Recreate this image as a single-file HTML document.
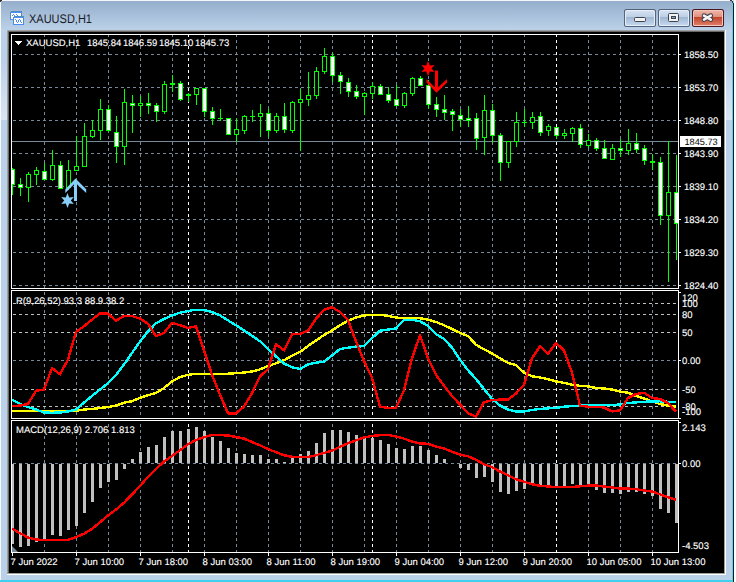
<!DOCTYPE html><html><head><meta charset="utf-8"><style>html,body{margin:0;padding:0;background:#fff;overflow:hidden;width:736px;height:582px}svg{display:block}text{font-family:"Liberation Sans", sans-serif}</style></head><body>
<svg width="736" height="582" viewBox="0 0 736 582">
<defs>
<linearGradient id="tb" x1="0" y1="0" x2="0" y2="1">
<stop offset="0" stop-color="#95aecb"/><stop offset="1" stop-color="#bcd3ea"/></linearGradient>
<linearGradient id="btnU" x1="0" y1="0" x2="0" y2="1"><stop offset="0" stop-color="#d3e1f0"/><stop offset="1" stop-color="#bccfe6"/></linearGradient>
<linearGradient id="btnL" x1="0" y1="0" x2="0" y2="1"><stop offset="0" stop-color="#9fb6d1"/><stop offset="1" stop-color="#c3d6ec"/></linearGradient>
<linearGradient id="clU" x1="0" y1="0" x2="0" y2="1"><stop offset="0" stop-color="#eeb2a4"/><stop offset="1" stop-color="#e0907e"/></linearGradient>
<linearGradient id="clL" x1="0" y1="0" x2="0" y2="1"><stop offset="0" stop-color="#c0432a"/><stop offset="1" stop-color="#dd7a64"/></linearGradient>
<linearGradient id="gl" x1="0" y1="0" x2="0" y2="1"><stop offset="0" stop-color="#dce8f4" stop-opacity="0"/><stop offset="1" stop-color="#dce8f4" stop-opacity="0.9"/></linearGradient>
<clipPath id="p1"><rect x="12" y="35" width="666" height="253"/></clipPath>
<clipPath id="p2"><rect x="12" y="291" width="666" height="127"/></clipPath>
<clipPath id="p3"><rect x="12" y="421" width="666" height="131"/></clipPath>
</defs>
<g shape-rendering="crispEdges">
<rect x="0" y="0" width="736" height="582" fill="#bad1ea"/>
<rect x="0" y="1" width="733" height="30" fill="url(#tb)"/>
<rect x="0" y="0" width="733" height="1" fill="#f4f6f8"/>
<rect x="0" y="0" width="1" height="582" fill="#f8f8f8"/>
<rect x="1" y="60" width="6" height="60" fill="url(#gl)"/><rect x="726" y="60" width="6" height="60" fill="url(#gl)"/>
<rect x="0" y="0" width="2" height="1" fill="#303030"/><rect x="0" y="1" width="1" height="1" fill="#404040"/><rect x="1" y="1" width="1" height="1" fill="#a0a8b0"/>
<rect x="730" y="0" width="2" height="1" fill="#303030"/><rect x="732" y="1" width="1" height="2" fill="#303030"/><rect x="731" y="1" width="1" height="1" fill="#80a0b0"/>
<rect x="734" y="0" width="2" height="582" fill="#ffffff"/>
<rect x="733" y="3" width="1" height="579" fill="#1c1c1c"/>
<rect x="732" y="3" width="1" height="579" fill="#5ad0f8"/>
<rect x="0" y="580" width="733" height="2" fill="#3fd0ee"/>
<rect x="7" y="30" width="719" height="545" fill="#ffffff"/>
<rect x="7" y="30" width="718" height="544" fill="#a0a0a0"/>
<rect x="8" y="31" width="716" height="542" fill="#696969"/>
<rect x="9" y="32" width="715" height="541" fill="#000000"/>
</g>
<g shape-rendering="crispEdges"><rect x="11" y="12" width="10" height="7" fill="#ffffff"/><rect x="10" y="12" width="1" height="1" fill="#4b8cf6"/><rect x="10" y="19" width="1" height="1" fill="#4b8cf6"/><rect x="11" y="11" width="1" height="1" fill="#4f8f86"/><rect x="11" y="12" width="1" height="1" fill="#4b8cf6"/><rect x="11" y="19" width="1" height="1" fill="#4b8cf6"/><rect x="12" y="11" width="1" height="1" fill="#4b8cf6"/><rect x="12" y="12" width="1" height="1" fill="#4b8cf6"/><rect x="12" y="19" width="1" height="1" fill="#4b8cf6"/><rect x="13" y="11" width="1" height="1" fill="#4f8f86"/><rect x="13" y="12" width="1" height="1" fill="#4b8cf6"/><rect x="13" y="19" width="1" height="1" fill="#4b8cf6"/><rect x="14" y="11" width="1" height="1" fill="#4b8cf6"/><rect x="14" y="12" width="1" height="1" fill="#4b8cf6"/><rect x="14" y="19" width="1" height="1" fill="#4b8cf6"/><rect x="15" y="11" width="1" height="1" fill="#4f8f86"/><rect x="15" y="12" width="1" height="1" fill="#4b8cf6"/><rect x="15" y="19" width="1" height="1" fill="#4b8cf6"/><rect x="16" y="11" width="1" height="1" fill="#4b8cf6"/><rect x="16" y="12" width="1" height="1" fill="#4b8cf6"/><rect x="16" y="19" width="1" height="1" fill="#4b8cf6"/><rect x="17" y="11" width="1" height="1" fill="#4f8f86"/><rect x="17" y="12" width="1" height="1" fill="#4b8cf6"/><rect x="17" y="19" width="1" height="1" fill="#4b8cf6"/><rect x="18" y="11" width="1" height="1" fill="#4b8cf6"/><rect x="18" y="12" width="1" height="1" fill="#4b8cf6"/><rect x="18" y="19" width="1" height="1" fill="#4b8cf6"/><rect x="19" y="11" width="1" height="1" fill="#4f8f86"/><rect x="19" y="12" width="1" height="1" fill="#4b8cf6"/><rect x="19" y="19" width="1" height="1" fill="#4b8cf6"/><rect x="20" y="11" width="1" height="1" fill="#4b8cf6"/><rect x="20" y="12" width="1" height="1" fill="#4b8cf6"/><rect x="20" y="19" width="1" height="1" fill="#4b8cf6"/><rect x="21" y="11" width="1" height="1" fill="#4f8f86"/><rect x="21" y="12" width="1" height="1" fill="#4b8cf6"/><rect x="21" y="19" width="1" height="1" fill="#4b8cf6"/><rect x="10" y="12" width="1" height="1" fill="#4b8cf6"/><rect x="21" y="12" width="1" height="1" fill="#4b8cf6"/><rect x="10" y="13" width="1" height="1" fill="#4f8f86"/><rect x="21" y="13" width="1" height="1" fill="#4f8f86"/><rect x="10" y="14" width="1" height="1" fill="#4b8cf6"/><rect x="21" y="14" width="1" height="1" fill="#4b8cf6"/><rect x="10" y="15" width="1" height="1" fill="#4f8f86"/><rect x="21" y="15" width="1" height="1" fill="#4f8f86"/><rect x="10" y="16" width="1" height="1" fill="#4b8cf6"/><rect x="21" y="16" width="1" height="1" fill="#4b8cf6"/><rect x="10" y="17" width="1" height="1" fill="#4f8f86"/><rect x="21" y="17" width="1" height="1" fill="#4f8f86"/><rect x="10" y="18" width="1" height="1" fill="#4b8cf6"/><rect x="21" y="18" width="1" height="1" fill="#4b8cf6"/><rect x="12" y="15" width="1" height="1" fill="#4b8cf6"/><rect x="13" y="14" width="1" height="1" fill="#4b8cf6"/><rect x="14" y="15" width="1" height="1" fill="#4b8cf6"/><rect x="16" y="14" width="1" height="1" fill="#4b8cf6"/><rect x="17" y="15" width="1" height="1" fill="#4b8cf6"/><rect x="18" y="16" width="1" height="1" fill="#4b8cf6"/><rect x="14" y="17" width="9" height="7" fill="#ffffff"/><rect x="13" y="17" width="1" height="1" fill="#4b8cf6"/><rect x="13" y="24" width="1" height="1" fill="#4b8cf6"/><rect x="14" y="16" width="1" height="1" fill="#4f8f86"/><rect x="14" y="17" width="1" height="1" fill="#4b8cf6"/><rect x="14" y="24" width="1" height="1" fill="#4b8cf6"/><rect x="15" y="16" width="1" height="1" fill="#4b8cf6"/><rect x="15" y="17" width="1" height="1" fill="#4b8cf6"/><rect x="15" y="24" width="1" height="1" fill="#4b8cf6"/><rect x="16" y="16" width="1" height="1" fill="#4f8f86"/><rect x="16" y="17" width="1" height="1" fill="#4b8cf6"/><rect x="16" y="24" width="1" height="1" fill="#4b8cf6"/><rect x="17" y="16" width="1" height="1" fill="#4b8cf6"/><rect x="17" y="17" width="1" height="1" fill="#4b8cf6"/><rect x="17" y="24" width="1" height="1" fill="#4b8cf6"/><rect x="18" y="16" width="1" height="1" fill="#4f8f86"/><rect x="18" y="17" width="1" height="1" fill="#4b8cf6"/><rect x="18" y="24" width="1" height="1" fill="#4b8cf6"/><rect x="19" y="16" width="1" height="1" fill="#4b8cf6"/><rect x="19" y="17" width="1" height="1" fill="#4b8cf6"/><rect x="19" y="24" width="1" height="1" fill="#4b8cf6"/><rect x="20" y="16" width="1" height="1" fill="#4f8f86"/><rect x="20" y="17" width="1" height="1" fill="#4b8cf6"/><rect x="20" y="24" width="1" height="1" fill="#4b8cf6"/><rect x="21" y="16" width="1" height="1" fill="#4b8cf6"/><rect x="21" y="17" width="1" height="1" fill="#4b8cf6"/><rect x="21" y="24" width="1" height="1" fill="#4b8cf6"/><rect x="22" y="16" width="1" height="1" fill="#4f8f86"/><rect x="22" y="17" width="1" height="1" fill="#4b8cf6"/><rect x="22" y="24" width="1" height="1" fill="#4b8cf6"/><rect x="23" y="16" width="1" height="1" fill="#4b8cf6"/><rect x="23" y="17" width="1" height="1" fill="#4b8cf6"/><rect x="23" y="24" width="1" height="1" fill="#4b8cf6"/><rect x="13" y="17" width="1" height="1" fill="#4b8cf6"/><rect x="23" y="17" width="1" height="1" fill="#4b8cf6"/><rect x="13" y="18" width="1" height="1" fill="#4f8f86"/><rect x="23" y="18" width="1" height="1" fill="#4f8f86"/><rect x="13" y="19" width="1" height="1" fill="#4b8cf6"/><rect x="23" y="19" width="1" height="1" fill="#4b8cf6"/><rect x="13" y="20" width="1" height="1" fill="#4f8f86"/><rect x="23" y="20" width="1" height="1" fill="#4f8f86"/><rect x="13" y="21" width="1" height="1" fill="#4b8cf6"/><rect x="23" y="21" width="1" height="1" fill="#4b8cf6"/><rect x="13" y="22" width="1" height="1" fill="#4f8f86"/><rect x="23" y="22" width="1" height="1" fill="#4f8f86"/><rect x="13" y="23" width="1" height="1" fill="#4b8cf6"/><rect x="23" y="23" width="1" height="1" fill="#4b8cf6"/><rect x="15" y="19" width="1" height="1" fill="#4b8cf6"/><rect x="16" y="20" width="1" height="1" fill="#4b8cf6"/><rect x="16" y="21" width="1" height="1" fill="#4b8cf6"/><rect x="17" y="22" width="1" height="1" fill="#4b8cf6"/><rect x="18" y="21" width="1" height="1" fill="#4b8cf6"/><rect x="18" y="20" width="1" height="1" fill="#4b8cf6"/><rect x="19" y="19" width="1" height="1" fill="#4b8cf6"/><rect x="20" y="20" width="1" height="1" fill="#4b8cf6"/><rect x="20" y="21" width="1" height="1" fill="#4b8cf6"/><rect x="21" y="22" width="1" height="1" fill="#4b8cf6"/></g>
<text transform="translate(29,22.5) scale(0.88,1)" font-size="12.5" text-rendering="geometricPrecision" fill="#1a1a26">XAUUSD,H1</text>
<rect x="624" y="9" width="32" height="18" rx="2.5" fill="#56627a"/><rect x="625" y="10" width="30" height="16" rx="1.5" fill="#e4eef8"/><rect x="626" y="11" width="28" height="6" fill="url(#btnU)"/><rect x="626" y="17" width="28" height="8" fill="url(#btnL)"/>
<rect x="658" y="9" width="32" height="18" rx="2.5" fill="#56627a"/><rect x="659" y="10" width="30" height="16" rx="1.5" fill="#e4eef8"/><rect x="660" y="11" width="28" height="6" fill="url(#btnU)"/><rect x="660" y="17" width="28" height="8" fill="url(#btnL)"/>
<rect x="692" y="9" width="32" height="18" rx="2.5" fill="#4a1620"/><rect x="693" y="10" width="30" height="16" rx="1.5" fill="#f3c7bc"/><rect x="694" y="11" width="28" height="6" fill="url(#clU)"/><rect x="694" y="17" width="28" height="8" fill="url(#clL)"/>
<rect x="634.5" y="17.5" width="11" height="4" rx="1" fill="#f2f2f2" stroke="#3b4250" stroke-width="1"/>
<rect x="668.5" y="13.5" width="10" height="8" rx="1" fill="#f2f2f2" stroke="#3b4250" stroke-width="1"/>
<rect x="671.5" y="16.5" width="4" height="2" fill="#8aa2c0" stroke="#3b4250" stroke-width="1"/>
<path d="M704,15.6 L710.8,19.6 M710.8,15.6 L704,19.6" stroke="#3a3e4a" stroke-width="4.6" stroke-linecap="round"/>
<path d="M704,15.6 L710.8,19.6 M710.8,15.6 L704,19.6" stroke="#f4f4f4" stroke-width="2.6" stroke-linecap="round"/>
<g shape-rendering="crispEdges">
<line x1="44.5" y1="34" x2="44.5" y2="288" stroke="#778899" stroke-dasharray="3 3"/>
<line x1="44.5" y1="292" x2="44.5" y2="418" stroke="#778899" stroke-dasharray="3 3"/>
<line x1="44.5" y1="424" x2="44.5" y2="552" stroke="#778899" stroke-dasharray="3 3"/>
<line x1="76.5" y1="34" x2="76.5" y2="288" stroke="#778899" stroke-dasharray="3 3"/>
<line x1="76.5" y1="292" x2="76.5" y2="418" stroke="#778899" stroke-dasharray="3 3"/>
<line x1="76.5" y1="424" x2="76.5" y2="552" stroke="#778899" stroke-dasharray="3 3"/>
<line x1="108.5" y1="34" x2="108.5" y2="288" stroke="#778899" stroke-dasharray="3 3"/>
<line x1="108.5" y1="292" x2="108.5" y2="418" stroke="#778899" stroke-dasharray="3 3"/>
<line x1="108.5" y1="424" x2="108.5" y2="552" stroke="#778899" stroke-dasharray="3 3"/>
<line x1="140.5" y1="34" x2="140.5" y2="288" stroke="#778899" stroke-dasharray="3 3"/>
<line x1="140.5" y1="292" x2="140.5" y2="418" stroke="#778899" stroke-dasharray="3 3"/>
<line x1="140.5" y1="424" x2="140.5" y2="552" stroke="#778899" stroke-dasharray="3 3"/>
<line x1="172.5" y1="34" x2="172.5" y2="288" stroke="#778899" stroke-dasharray="3 3"/>
<line x1="172.5" y1="292" x2="172.5" y2="418" stroke="#778899" stroke-dasharray="3 3"/>
<line x1="172.5" y1="424" x2="172.5" y2="552" stroke="#778899" stroke-dasharray="3 3"/>
<line x1="204.5" y1="34" x2="204.5" y2="288" stroke="#778899" stroke-dasharray="3 3"/>
<line x1="204.5" y1="292" x2="204.5" y2="418" stroke="#778899" stroke-dasharray="3 3"/>
<line x1="204.5" y1="424" x2="204.5" y2="552" stroke="#778899" stroke-dasharray="3 3"/>
<line x1="236.5" y1="34" x2="236.5" y2="288" stroke="#778899" stroke-dasharray="3 3"/>
<line x1="236.5" y1="292" x2="236.5" y2="418" stroke="#778899" stroke-dasharray="3 3"/>
<line x1="236.5" y1="424" x2="236.5" y2="552" stroke="#778899" stroke-dasharray="3 3"/>
<line x1="268.5" y1="34" x2="268.5" y2="288" stroke="#778899" stroke-dasharray="3 3"/>
<line x1="268.5" y1="292" x2="268.5" y2="418" stroke="#778899" stroke-dasharray="3 3"/>
<line x1="268.5" y1="424" x2="268.5" y2="552" stroke="#778899" stroke-dasharray="3 3"/>
<line x1="300.5" y1="34" x2="300.5" y2="288" stroke="#778899" stroke-dasharray="3 3"/>
<line x1="300.5" y1="292" x2="300.5" y2="418" stroke="#778899" stroke-dasharray="3 3"/>
<line x1="300.5" y1="424" x2="300.5" y2="552" stroke="#778899" stroke-dasharray="3 3"/>
<line x1="332.5" y1="34" x2="332.5" y2="288" stroke="#778899" stroke-dasharray="3 3"/>
<line x1="332.5" y1="292" x2="332.5" y2="418" stroke="#778899" stroke-dasharray="3 3"/>
<line x1="332.5" y1="424" x2="332.5" y2="552" stroke="#778899" stroke-dasharray="3 3"/>
<line x1="364.5" y1="34" x2="364.5" y2="288" stroke="#778899" stroke-dasharray="3 3"/>
<line x1="364.5" y1="292" x2="364.5" y2="418" stroke="#778899" stroke-dasharray="3 3"/>
<line x1="364.5" y1="424" x2="364.5" y2="552" stroke="#778899" stroke-dasharray="3 3"/>
<line x1="396.5" y1="34" x2="396.5" y2="288" stroke="#778899" stroke-dasharray="3 3"/>
<line x1="396.5" y1="292" x2="396.5" y2="418" stroke="#778899" stroke-dasharray="3 3"/>
<line x1="396.5" y1="424" x2="396.5" y2="552" stroke="#778899" stroke-dasharray="3 3"/>
<line x1="428.5" y1="34" x2="428.5" y2="288" stroke="#778899" stroke-dasharray="3 3"/>
<line x1="428.5" y1="292" x2="428.5" y2="418" stroke="#778899" stroke-dasharray="3 3"/>
<line x1="428.5" y1="424" x2="428.5" y2="552" stroke="#778899" stroke-dasharray="3 3"/>
<line x1="460.5" y1="34" x2="460.5" y2="288" stroke="#778899" stroke-dasharray="3 3"/>
<line x1="460.5" y1="292" x2="460.5" y2="418" stroke="#778899" stroke-dasharray="3 3"/>
<line x1="460.5" y1="424" x2="460.5" y2="552" stroke="#778899" stroke-dasharray="3 3"/>
<line x1="492.5" y1="34" x2="492.5" y2="288" stroke="#778899" stroke-dasharray="3 3"/>
<line x1="492.5" y1="292" x2="492.5" y2="418" stroke="#778899" stroke-dasharray="3 3"/>
<line x1="492.5" y1="424" x2="492.5" y2="552" stroke="#778899" stroke-dasharray="3 3"/>
<line x1="524.5" y1="34" x2="524.5" y2="288" stroke="#778899" stroke-dasharray="3 3"/>
<line x1="524.5" y1="292" x2="524.5" y2="418" stroke="#778899" stroke-dasharray="3 3"/>
<line x1="524.5" y1="424" x2="524.5" y2="552" stroke="#778899" stroke-dasharray="3 3"/>
<line x1="556.5" y1="34" x2="556.5" y2="288" stroke="#778899" stroke-dasharray="3 3"/>
<line x1="556.5" y1="292" x2="556.5" y2="418" stroke="#778899" stroke-dasharray="3 3"/>
<line x1="556.5" y1="424" x2="556.5" y2="552" stroke="#778899" stroke-dasharray="3 3"/>
<line x1="588.5" y1="34" x2="588.5" y2="288" stroke="#778899" stroke-dasharray="3 3"/>
<line x1="588.5" y1="292" x2="588.5" y2="418" stroke="#778899" stroke-dasharray="3 3"/>
<line x1="588.5" y1="424" x2="588.5" y2="552" stroke="#778899" stroke-dasharray="3 3"/>
<line x1="620.5" y1="34" x2="620.5" y2="288" stroke="#778899" stroke-dasharray="3 3"/>
<line x1="620.5" y1="292" x2="620.5" y2="418" stroke="#778899" stroke-dasharray="3 3"/>
<line x1="620.5" y1="424" x2="620.5" y2="552" stroke="#778899" stroke-dasharray="3 3"/>
<line x1="652.5" y1="34" x2="652.5" y2="288" stroke="#778899" stroke-dasharray="3 3"/>
<line x1="652.5" y1="292" x2="652.5" y2="418" stroke="#778899" stroke-dasharray="3 3"/>
<line x1="652.5" y1="424" x2="652.5" y2="552" stroke="#778899" stroke-dasharray="3 3"/>
<line x1="13" y1="54.5" x2="678" y2="54.5" stroke="#778899" stroke-dasharray="3 3"/>
<rect x="679" y="54" width="2" height="1" fill="#fff"/>
<line x1="13" y1="87.5" x2="678" y2="87.5" stroke="#778899" stroke-dasharray="3 3"/>
<rect x="679" y="87" width="2" height="1" fill="#fff"/>
<line x1="13" y1="120.5" x2="678" y2="120.5" stroke="#778899" stroke-dasharray="3 3"/>
<rect x="679" y="120" width="2" height="1" fill="#fff"/>
<line x1="13" y1="153.5" x2="678" y2="153.5" stroke="#778899" stroke-dasharray="3 3"/>
<rect x="679" y="153" width="2" height="1" fill="#fff"/>
<line x1="13" y1="186.5" x2="678" y2="186.5" stroke="#778899" stroke-dasharray="3 3"/>
<rect x="679" y="186" width="2" height="1" fill="#fff"/>
<line x1="13" y1="219.5" x2="678" y2="219.5" stroke="#778899" stroke-dasharray="3 3"/>
<rect x="679" y="219" width="2" height="1" fill="#fff"/>
<line x1="13" y1="252.5" x2="678" y2="252.5" stroke="#778899" stroke-dasharray="3 3"/>
<rect x="679" y="252" width="2" height="1" fill="#fff"/>
<line x1="13" y1="285.5" x2="678" y2="285.5" stroke="#778899" stroke-dasharray="3 3"/>
<rect x="679" y="285" width="2" height="1" fill="#fff"/>
<line x1="13" y1="303.5" x2="678" y2="303.5" stroke="#c0c0c0" stroke-dasharray="3 3"/>
<line x1="13" y1="314.5" x2="678" y2="314.5" stroke="#c0c0c0" stroke-dasharray="3 3"/>
<line x1="13" y1="332.5" x2="678" y2="332.5" stroke="#c0c0c0" stroke-dasharray="3 3"/>
<line x1="13" y1="389.5" x2="678" y2="389.5" stroke="#c0c0c0" stroke-dasharray="3 3"/>
<line x1="13" y1="406.5" x2="678" y2="406.5" stroke="#c0c0c0" stroke-dasharray="3 3"/>
<line x1="13" y1="360.5" x2="678" y2="360.5" stroke="#778899" stroke-dasharray="3 3"/>
<line x1="13" y1="463.5" x2="678" y2="463.5" stroke="#778899" stroke-dasharray="3 3"/>
<line x1="188.5" y1="34" x2="188.5" y2="288" stroke="#ffffff" stroke-dasharray="3 3"/>
<line x1="188.5" y1="292" x2="188.5" y2="418" stroke="#ffffff" stroke-dasharray="3 3"/>
<line x1="188.5" y1="424" x2="188.5" y2="552" stroke="#ffffff" stroke-dasharray="3 3"/>
<line x1="372.5" y1="34" x2="372.5" y2="288" stroke="#ffffff" stroke-dasharray="3 3"/>
<line x1="372.5" y1="292" x2="372.5" y2="418" stroke="#ffffff" stroke-dasharray="3 3"/>
<line x1="372.5" y1="424" x2="372.5" y2="552" stroke="#ffffff" stroke-dasharray="3 3"/>
<line x1="556.5" y1="34" x2="556.5" y2="288" stroke="#ffffff" stroke-dasharray="3 3"/>
<line x1="556.5" y1="292" x2="556.5" y2="418" stroke="#ffffff" stroke-dasharray="3 3"/>
<line x1="556.5" y1="424" x2="556.5" y2="552" stroke="#ffffff" stroke-dasharray="3 3"/>
<rect x="12" y="141" width="666" height="1" fill="#778899"/>
</g>
<g clip-path="url(#p1)" shape-rendering="crispEdges">
<rect x="12" y="168" width="1" height="27" fill="#00ff00"/>
<rect x="10" y="169" width="5" height="16" fill="#00ff00"/>
<rect x="11" y="170" width="3" height="14" fill="#ffffff"/>
<rect x="20" y="178" width="1" height="18" fill="#00ff00"/>
<rect x="18" y="184" width="5" height="4" fill="#00ff00"/>
<rect x="19" y="185" width="3" height="2" fill="#ffffff"/>
<rect x="28" y="172" width="1" height="30" fill="#00ff00"/>
<rect x="26" y="174" width="5" height="14" fill="#00ff00"/>
<rect x="27" y="175" width="3" height="12" fill="#000000"/>
<rect x="36" y="167" width="1" height="18" fill="#00ff00"/>
<rect x="34" y="170" width="5" height="5" fill="#00ff00"/>
<rect x="35" y="171" width="3" height="3" fill="#000000"/>
<rect x="44" y="163" width="1" height="17" fill="#00ff00"/>
<rect x="42" y="171" width="5" height="9" fill="#00ff00"/>
<rect x="43" y="172" width="3" height="7" fill="#ffffff"/>
<rect x="52" y="150" width="1" height="31" fill="#00ff00"/>
<rect x="50" y="165" width="5" height="15" fill="#00ff00"/>
<rect x="51" y="166" width="3" height="13" fill="#000000"/>
<rect x="60" y="161" width="1" height="28" fill="#00ff00"/>
<rect x="58" y="165" width="5" height="24" fill="#00ff00"/>
<rect x="59" y="166" width="3" height="22" fill="#ffffff"/>
<rect x="68" y="160" width="1" height="30" fill="#00ff00"/>
<rect x="66" y="170" width="5" height="18" fill="#00ff00"/>
<rect x="67" y="171" width="3" height="16" fill="#000000"/>
<rect x="76" y="136" width="1" height="35" fill="#00ff00"/>
<rect x="74" y="166" width="5" height="5" fill="#00ff00"/>
<rect x="75" y="167" width="3" height="3" fill="#000000"/>
<rect x="84" y="123" width="1" height="44" fill="#00ff00"/>
<rect x="82" y="136" width="5" height="31" fill="#00ff00"/>
<rect x="83" y="137" width="3" height="29" fill="#000000"/>
<rect x="92" y="120" width="1" height="18" fill="#00ff00"/>
<rect x="90" y="130" width="5" height="7" fill="#00ff00"/>
<rect x="91" y="131" width="3" height="5" fill="#000000"/>
<rect x="100" y="99" width="1" height="41" fill="#00ff00"/>
<rect x="98" y="109" width="5" height="22" fill="#00ff00"/>
<rect x="99" y="110" width="3" height="20" fill="#000000"/>
<rect x="108" y="105" width="1" height="27" fill="#00ff00"/>
<rect x="106" y="109" width="5" height="22" fill="#00ff00"/>
<rect x="107" y="110" width="3" height="20" fill="#ffffff"/>
<rect x="116" y="116" width="1" height="47" fill="#00ff00"/>
<rect x="114" y="132" width="5" height="15" fill="#00ff00"/>
<rect x="115" y="133" width="3" height="13" fill="#ffffff"/>
<rect x="124" y="89" width="1" height="76" fill="#00ff00"/>
<rect x="122" y="102" width="5" height="45" fill="#00ff00"/>
<rect x="123" y="103" width="3" height="43" fill="#000000"/>
<rect x="132" y="95" width="1" height="38" fill="#00ff00"/>
<rect x="130" y="103" width="5" height="3" fill="#00ff00"/>
<rect x="131" y="104" width="3" height="1" fill="#ffffff"/>
<rect x="140" y="96" width="1" height="21" fill="#00ff00"/>
<rect x="138" y="103" width="5" height="3" fill="#00ff00"/>
<rect x="139" y="104" width="3" height="1" fill="#000000"/>
<rect x="148" y="93" width="1" height="21" fill="#00ff00"/>
<rect x="146" y="103" width="5" height="3" fill="#00ff00"/>
<rect x="147" y="104" width="3" height="1" fill="#ffffff"/>
<rect x="156" y="103" width="1" height="19" fill="#00ff00"/>
<rect x="154" y="105" width="5" height="7" fill="#00ff00"/>
<rect x="155" y="106" width="3" height="5" fill="#ffffff"/>
<rect x="164" y="81" width="1" height="33" fill="#00ff00"/>
<rect x="162" y="84" width="5" height="28" fill="#00ff00"/>
<rect x="163" y="85" width="3" height="26" fill="#000000"/>
<rect x="172" y="75" width="1" height="17" fill="#00ff00"/>
<rect x="170" y="83" width="5" height="2" fill="#00ff00"/>
<rect x="180" y="81" width="1" height="20" fill="#00ff00"/>
<rect x="178" y="83" width="5" height="17" fill="#00ff00"/>
<rect x="179" y="84" width="3" height="15" fill="#ffffff"/>
<rect x="188" y="93" width="1" height="9" fill="#00ff00"/>
<rect x="186" y="94" width="5" height="2" fill="#00ff00"/>
<rect x="196" y="88" width="1" height="17" fill="#00ff00"/>
<rect x="194" y="88" width="5" height="7" fill="#00ff00"/>
<rect x="195" y="89" width="3" height="5" fill="#000000"/>
<rect x="204" y="88" width="1" height="29" fill="#00ff00"/>
<rect x="202" y="88" width="5" height="24" fill="#00ff00"/>
<rect x="203" y="89" width="3" height="22" fill="#ffffff"/>
<rect x="212" y="107" width="1" height="18" fill="#00ff00"/>
<rect x="210" y="111" width="5" height="8" fill="#00ff00"/>
<rect x="211" y="112" width="3" height="6" fill="#ffffff"/>
<rect x="220" y="109" width="1" height="12" fill="#00ff00"/>
<rect x="218" y="118" width="5" height="1" fill="#00ff00"/>
<rect x="228" y="118" width="1" height="17" fill="#00ff00"/>
<rect x="226" y="118" width="5" height="17" fill="#00ff00"/>
<rect x="227" y="119" width="3" height="15" fill="#ffffff"/>
<rect x="236" y="118" width="1" height="24" fill="#00ff00"/>
<rect x="234" y="129" width="5" height="6" fill="#00ff00"/>
<rect x="235" y="130" width="3" height="4" fill="#000000"/>
<rect x="244" y="115" width="1" height="19" fill="#00ff00"/>
<rect x="242" y="116" width="5" height="15" fill="#00ff00"/>
<rect x="243" y="117" width="3" height="13" fill="#000000"/>
<rect x="252" y="110" width="1" height="12" fill="#00ff00"/>
<rect x="250" y="116" width="5" height="1" fill="#00ff00"/>
<rect x="260" y="104" width="1" height="33" fill="#00ff00"/>
<rect x="258" y="113" width="5" height="4" fill="#00ff00"/>
<rect x="259" y="114" width="3" height="2" fill="#000000"/>
<rect x="268" y="109" width="1" height="28" fill="#00ff00"/>
<rect x="266" y="113" width="5" height="18" fill="#00ff00"/>
<rect x="267" y="114" width="3" height="16" fill="#ffffff"/>
<rect x="276" y="113" width="1" height="20" fill="#00ff00"/>
<rect x="274" y="116" width="5" height="15" fill="#00ff00"/>
<rect x="275" y="117" width="3" height="13" fill="#000000"/>
<rect x="284" y="103" width="1" height="30" fill="#00ff00"/>
<rect x="282" y="116" width="5" height="14" fill="#00ff00"/>
<rect x="283" y="117" width="3" height="12" fill="#ffffff"/>
<rect x="292" y="101" width="1" height="32" fill="#00ff00"/>
<rect x="290" y="102" width="5" height="29" fill="#00ff00"/>
<rect x="291" y="103" width="3" height="27" fill="#000000"/>
<rect x="300" y="89" width="1" height="62" fill="#00ff00"/>
<rect x="298" y="99" width="5" height="4" fill="#00ff00"/>
<rect x="299" y="100" width="3" height="2" fill="#000000"/>
<rect x="308" y="72" width="1" height="34" fill="#00ff00"/>
<rect x="306" y="95" width="5" height="5" fill="#00ff00"/>
<rect x="307" y="96" width="3" height="3" fill="#000000"/>
<rect x="316" y="67" width="1" height="32" fill="#00ff00"/>
<rect x="314" y="71" width="5" height="25" fill="#00ff00"/>
<rect x="315" y="72" width="3" height="23" fill="#000000"/>
<rect x="324" y="48" width="1" height="26" fill="#00ff00"/>
<rect x="322" y="56" width="5" height="16" fill="#00ff00"/>
<rect x="323" y="57" width="3" height="14" fill="#000000"/>
<rect x="332" y="53" width="1" height="29" fill="#00ff00"/>
<rect x="330" y="56" width="5" height="20" fill="#00ff00"/>
<rect x="331" y="57" width="3" height="18" fill="#ffffff"/>
<rect x="340" y="72" width="1" height="22" fill="#00ff00"/>
<rect x="338" y="75" width="5" height="7" fill="#00ff00"/>
<rect x="339" y="76" width="3" height="5" fill="#ffffff"/>
<rect x="348" y="78" width="1" height="19" fill="#00ff00"/>
<rect x="346" y="82" width="5" height="10" fill="#00ff00"/>
<rect x="347" y="83" width="3" height="8" fill="#ffffff"/>
<rect x="356" y="85" width="1" height="14" fill="#00ff00"/>
<rect x="354" y="91" width="5" height="6" fill="#00ff00"/>
<rect x="355" y="92" width="3" height="4" fill="#ffffff"/>
<rect x="364" y="92" width="1" height="23" fill="#00ff00"/>
<rect x="362" y="93" width="5" height="4" fill="#00ff00"/>
<rect x="363" y="94" width="3" height="2" fill="#000000"/>
<rect x="372" y="82" width="1" height="17" fill="#00ff00"/>
<rect x="370" y="86" width="5" height="8" fill="#00ff00"/>
<rect x="371" y="87" width="3" height="6" fill="#000000"/>
<rect x="380" y="84" width="1" height="11" fill="#00ff00"/>
<rect x="378" y="86" width="5" height="9" fill="#00ff00"/>
<rect x="379" y="87" width="3" height="7" fill="#ffffff"/>
<rect x="388" y="87" width="1" height="16" fill="#00ff00"/>
<rect x="386" y="94" width="5" height="7" fill="#00ff00"/>
<rect x="387" y="95" width="3" height="5" fill="#ffffff"/>
<rect x="396" y="85" width="1" height="21" fill="#00ff00"/>
<rect x="394" y="99" width="5" height="7" fill="#00ff00"/>
<rect x="395" y="100" width="3" height="5" fill="#ffffff"/>
<rect x="404" y="92" width="1" height="16" fill="#00ff00"/>
<rect x="402" y="93" width="5" height="13" fill="#00ff00"/>
<rect x="403" y="94" width="3" height="11" fill="#000000"/>
<rect x="412" y="77" width="1" height="19" fill="#00ff00"/>
<rect x="410" y="78" width="5" height="16" fill="#00ff00"/>
<rect x="411" y="79" width="3" height="14" fill="#000000"/>
<rect x="420" y="76" width="1" height="10" fill="#00ff00"/>
<rect x="418" y="78" width="5" height="8" fill="#00ff00"/>
<rect x="419" y="79" width="3" height="6" fill="#ffffff"/>
<rect x="428" y="80" width="1" height="29" fill="#00ff00"/>
<rect x="426" y="85" width="5" height="20" fill="#00ff00"/>
<rect x="427" y="86" width="3" height="18" fill="#ffffff"/>
<rect x="436" y="97" width="1" height="20" fill="#00ff00"/>
<rect x="434" y="104" width="5" height="6" fill="#00ff00"/>
<rect x="435" y="105" width="3" height="4" fill="#ffffff"/>
<rect x="444" y="95" width="1" height="25" fill="#00ff00"/>
<rect x="442" y="109" width="5" height="4" fill="#00ff00"/>
<rect x="443" y="110" width="3" height="2" fill="#ffffff"/>
<rect x="452" y="109" width="1" height="22" fill="#00ff00"/>
<rect x="450" y="111" width="5" height="4" fill="#00ff00"/>
<rect x="451" y="112" width="3" height="2" fill="#ffffff"/>
<rect x="460" y="109" width="1" height="18" fill="#00ff00"/>
<rect x="458" y="115" width="5" height="5" fill="#00ff00"/>
<rect x="459" y="116" width="3" height="3" fill="#ffffff"/>
<rect x="468" y="106" width="1" height="21" fill="#00ff00"/>
<rect x="466" y="118" width="5" height="3" fill="#00ff00"/>
<rect x="467" y="119" width="3" height="1" fill="#ffffff"/>
<rect x="476" y="113" width="1" height="37" fill="#00ff00"/>
<rect x="474" y="118" width="5" height="21" fill="#00ff00"/>
<rect x="475" y="119" width="3" height="19" fill="#ffffff"/>
<rect x="484" y="95" width="1" height="60" fill="#00ff00"/>
<rect x="482" y="110" width="5" height="28" fill="#00ff00"/>
<rect x="483" y="111" width="3" height="26" fill="#000000"/>
<rect x="492" y="104" width="1" height="39" fill="#00ff00"/>
<rect x="490" y="110" width="5" height="26" fill="#00ff00"/>
<rect x="491" y="111" width="3" height="24" fill="#ffffff"/>
<rect x="500" y="133" width="1" height="48" fill="#00ff00"/>
<rect x="498" y="135" width="5" height="28" fill="#00ff00"/>
<rect x="499" y="136" width="3" height="26" fill="#ffffff"/>
<rect x="508" y="141" width="1" height="27" fill="#00ff00"/>
<rect x="506" y="141" width="5" height="22" fill="#00ff00"/>
<rect x="507" y="142" width="3" height="20" fill="#000000"/>
<rect x="516" y="112" width="1" height="35" fill="#00ff00"/>
<rect x="514" y="122" width="5" height="20" fill="#00ff00"/>
<rect x="515" y="123" width="3" height="18" fill="#000000"/>
<rect x="524" y="109" width="1" height="18" fill="#00ff00"/>
<rect x="522" y="122" width="5" height="1" fill="#00ff00"/>
<rect x="532" y="112" width="1" height="17" fill="#00ff00"/>
<rect x="530" y="117" width="5" height="6" fill="#00ff00"/>
<rect x="531" y="118" width="3" height="4" fill="#000000"/>
<rect x="540" y="112" width="1" height="24" fill="#00ff00"/>
<rect x="538" y="116" width="5" height="17" fill="#00ff00"/>
<rect x="539" y="117" width="3" height="15" fill="#ffffff"/>
<rect x="548" y="124" width="1" height="12" fill="#00ff00"/>
<rect x="546" y="126" width="5" height="5" fill="#00ff00"/>
<rect x="547" y="127" width="3" height="3" fill="#000000"/>
<rect x="556" y="127" width="1" height="12" fill="#00ff00"/>
<rect x="554" y="127" width="5" height="9" fill="#00ff00"/>
<rect x="555" y="128" width="3" height="7" fill="#ffffff"/>
<rect x="564" y="129" width="1" height="10" fill="#00ff00"/>
<rect x="562" y="133" width="5" height="3" fill="#00ff00"/>
<rect x="563" y="134" width="3" height="1" fill="#000000"/>
<rect x="572" y="127" width="1" height="15" fill="#00ff00"/>
<rect x="570" y="128" width="5" height="6" fill="#00ff00"/>
<rect x="571" y="129" width="3" height="4" fill="#000000"/>
<rect x="580" y="124" width="1" height="24" fill="#00ff00"/>
<rect x="578" y="128" width="5" height="17" fill="#00ff00"/>
<rect x="579" y="129" width="3" height="15" fill="#ffffff"/>
<rect x="588" y="134" width="1" height="14" fill="#00ff00"/>
<rect x="586" y="140" width="5" height="6" fill="#00ff00"/>
<rect x="587" y="141" width="3" height="4" fill="#000000"/>
<rect x="596" y="138" width="1" height="13" fill="#00ff00"/>
<rect x="594" y="140" width="5" height="9" fill="#00ff00"/>
<rect x="595" y="141" width="3" height="7" fill="#ffffff"/>
<rect x="604" y="140" width="1" height="19" fill="#00ff00"/>
<rect x="602" y="148" width="5" height="11" fill="#00ff00"/>
<rect x="603" y="149" width="3" height="9" fill="#ffffff"/>
<rect x="612" y="144" width="1" height="16" fill="#00ff00"/>
<rect x="610" y="148" width="5" height="12" fill="#00ff00"/>
<rect x="611" y="149" width="3" height="10" fill="#000000"/>
<rect x="620" y="139" width="1" height="18" fill="#00ff00"/>
<rect x="618" y="148" width="5" height="3" fill="#00ff00"/>
<rect x="619" y="149" width="3" height="1" fill="#ffffff"/>
<rect x="628" y="129" width="1" height="26" fill="#00ff00"/>
<rect x="626" y="143" width="5" height="8" fill="#00ff00"/>
<rect x="627" y="144" width="3" height="6" fill="#000000"/>
<rect x="636" y="133" width="1" height="20" fill="#00ff00"/>
<rect x="634" y="143" width="5" height="7" fill="#00ff00"/>
<rect x="635" y="144" width="3" height="5" fill="#ffffff"/>
<rect x="644" y="145" width="1" height="20" fill="#00ff00"/>
<rect x="642" y="148" width="5" height="13" fill="#00ff00"/>
<rect x="643" y="149" width="3" height="11" fill="#ffffff"/>
<rect x="652" y="154" width="1" height="16" fill="#00ff00"/>
<rect x="650" y="161" width="5" height="2" fill="#00ff00"/>
<rect x="660" y="157" width="1" height="68" fill="#00ff00"/>
<rect x="658" y="162" width="5" height="54" fill="#00ff00"/>
<rect x="659" y="163" width="3" height="52" fill="#ffffff"/>
<rect x="668" y="141" width="1" height="141" fill="#00ff00"/>
<rect x="666" y="192" width="5" height="24" fill="#00ff00"/>
<rect x="667" y="193" width="3" height="22" fill="#000000"/>
<rect x="676" y="155" width="1" height="105" fill="#00ff00"/>
<rect x="674" y="192" width="5" height="32" fill="#00ff00"/>
<rect x="675" y="193" width="3" height="30" fill="#ffffff"/>
</g>
<g fill="#87cefa">
<polygon points="75.5,178.6 86.2,189.3 86.2,193 77,184.2 77,201 74,201 74,184.2 65.3,192.9 65.3,189.2"/>
<polygon points="67.5,193 69.2,197.6 73.8,197.1 70.8,200.5 73.8,203.9 69.2,203.4 67.5,208 65.8,203.4 61.2,203.9 64.2,200.5 61.2,197.1 65.8,197.6"/>
</g>
<g fill="#ff0000">
<polygon points="436.5,92.8 447,82.6 447,79 438,87.6 438,70.5 435,70.5 435,87.6 426.5,79 426.5,82.6"/>
<polygon points="428,61 429.8,65.4 434.5,64.9 431.5,68.5 434.5,72.1 429.8,71.6 428,76 426.2,71.6 421.5,72.1 424.5,68.5 421.5,64.9 426.2,65.4"/>
</g>
<polyline clip-path="url(#p2)" points="12,411.2 20,411.2 28,411.2 36,411.2 44,411.2 52,411.2 60,411.2 68,411 76,410.7 84,409.5 92,409 100,408 108,407 116,405.6 124,402.7 132,401.2 140,397.9 148,395.2 156,393 164,388 172,381.4 180,377 188,374.8 196,373.7 204,373.7 212,373.7 220,373.7 228,373.7 236,373.2 244,372.5 252,371.5 260,369.4 268,366.2 276,363.3 284,360.2 292,355.8 300,351.9 308,346 316,340.5 324,335 332,330.6 340,325.2 348,320.8 356,317.5 364,315.5 372,314.7 380,314.7 388,316 396,317.5 404,318.2 412,318.2 420,318.2 428,319.7 436,322 444,325.2 452,329 460,332.9 468,336 476,344.8 484,349.3 492,353.5 500,358.2 508,363 516,365 524,372.6 532,376.3 540,377.5 548,379.2 556,381.4 564,382.9 572,384.7 580,385.8 588,386.4 596,388 604,388.5 612,389.5 620,391.5 628,392.8 636,395.8 644,398.5 652,401.3 660,404 668,405.6 676,406.7" fill="none" stroke="#ffff00" stroke-width="2.4" stroke-linejoin="round" shape-rendering="crispEdges"/>
<polyline clip-path="url(#p2)" points="12,399.7 20,404 28,407 36,409.5 44,412.5 52,412.8 60,412.5 68,411.5 76,409.5 84,402.5 92,396 100,389.5 108,383.3 116,375 124,364.5 132,353 140,341.5 148,331.5 156,323.2 164,319 172,315.5 180,312.7 188,311 196,309.7 204,309.9 212,312.1 220,315.4 228,320.4 236,325.3 244,330.5 252,335.8 260,341.3 268,349 276,356.4 284,363.5 292,367.3 300,369 308,364.4 316,362.7 324,361.6 332,355.5 340,349 348,347.7 356,346.5 364,346.2 372,338.2 380,330.7 388,329.6 396,328.5 404,319.7 412,319.7 420,321.3 428,325.8 436,334 444,339 452,347.5 460,359.7 468,370.2 476,379 484,389 492,398.8 500,405.6 508,409.5 516,411.5 524,411.5 532,410 540,408.9 548,408.4 556,407.8 564,406.7 572,406 580,405.6 588,405.6 596,405.6 604,405.3 612,405 620,404.5 628,403 636,402.4 644,401.8 652,401.5 660,401.3 668,401.8 676,401.8" fill="none" stroke="#00ffff" stroke-width="2.4" stroke-linejoin="round" shape-rendering="crispEdges"/>
<polyline clip-path="url(#p2)" points="12,406 20,405.6 28,404 36,390.8 44,389.5 52,368 60,374.4 68,359.5 76,331.8 84,326.3 92,319.7 100,313.5 108,313.7 116,320.8 124,316 132,316 140,318.6 148,323.8 156,336.2 164,333 172,323 180,325.2 188,328 196,326.3 204,350.5 212,374.8 220,394.6 228,413.3 236,413.3 244,406.7 252,393 260,376.5 268,369 276,344.2 284,350.4 292,334.2 300,334 308,330.7 316,318.6 324,309.8 332,307.2 340,312 348,320.2 356,341.5 364,361 372,377.8 380,406.7 388,407.8 396,407.8 404,390.2 412,358.5 420,335 428,358.3 436,374.8 444,385.8 452,396 460,404.5 468,413.3 476,416.6 484,402.3 492,400.1 500,399.6 508,399.6 516,393.5 524,384.7 532,358.3 540,346.1 548,353.8 556,342.8 564,350.5 572,372.6 580,405.6 588,406.7 596,406.7 604,407.5 612,411.4 620,410.3 628,398 636,394.1 644,392.7 652,398 660,399 668,402.9 676,411.7" fill="none" stroke="#ff0000" stroke-width="2.4" stroke-linejoin="round" shape-rendering="crispEdges"/>
<g clip-path="url(#p3)" shape-rendering="crispEdges" fill="#c0c0c0">
<rect x="11" y="464" width="3" height="80"/>
<rect x="19" y="464" width="3" height="83"/>
<rect x="27" y="464" width="3" height="82"/>
<rect x="35" y="464" width="3" height="78"/>
<rect x="43" y="464" width="3" height="76"/>
<rect x="51" y="464" width="3" height="71"/>
<rect x="59" y="464" width="3" height="72"/>
<rect x="67" y="464" width="3" height="66"/>
<rect x="75" y="464" width="3" height="62"/>
<rect x="83" y="464" width="3" height="49"/>
<rect x="91" y="464" width="3" height="38"/>
<rect x="99" y="464" width="3" height="24"/>
<rect x="107" y="464" width="3" height="18"/>
<rect x="115" y="464" width="3" height="16"/>
<rect x="123" y="464" width="3" height="5"/>
<rect x="131" y="459" width="3" height="4"/>
<rect x="139" y="452" width="3" height="11"/>
<rect x="147" y="447" width="3" height="16"/>
<rect x="155" y="445" width="3" height="18"/>
<rect x="163" y="437" width="3" height="26"/>
<rect x="171" y="431" width="3" height="32"/>
<rect x="179" y="431" width="3" height="32"/>
<rect x="187" y="429" width="3" height="34"/>
<rect x="195" y="427" width="3" height="36"/>
<rect x="203" y="431" width="3" height="32"/>
<rect x="211" y="437" width="3" height="26"/>
<rect x="219" y="441" width="3" height="22"/>
<rect x="227" y="448" width="3" height="15"/>
<rect x="235" y="453" width="3" height="10"/>
<rect x="243" y="454" width="3" height="9"/>
<rect x="251" y="455" width="3" height="8"/>
<rect x="259" y="455" width="3" height="8"/>
<rect x="267" y="459" width="3" height="4"/>
<rect x="275" y="459" width="3" height="4"/>
<rect x="283" y="462" width="3" height="1"/>
<rect x="291" y="457" width="3" height="6"/>
<rect x="299" y="454" width="3" height="9"/>
<rect x="307" y="451" width="3" height="12"/>
<rect x="315" y="443" width="3" height="20"/>
<rect x="323" y="433" width="3" height="30"/>
<rect x="331" y="430" width="3" height="33"/>
<rect x="339" y="430" width="3" height="33"/>
<rect x="347" y="432" width="3" height="31"/>
<rect x="355" y="435" width="3" height="28"/>
<rect x="363" y="436" width="3" height="27"/>
<rect x="371" y="438" width="3" height="25"/>
<rect x="379" y="440" width="3" height="23"/>
<rect x="387" y="444" width="3" height="19"/>
<rect x="395" y="448" width="3" height="15"/>
<rect x="403" y="449" width="3" height="14"/>
<rect x="411" y="446" width="3" height="17"/>
<rect x="419" y="446" width="3" height="17"/>
<rect x="427" y="450" width="3" height="13"/>
<rect x="435" y="455" width="3" height="8"/>
<rect x="443" y="459" width="3" height="4"/>
<rect x="459" y="464" width="3" height="4"/>
<rect x="467" y="464" width="3" height="6"/>
<rect x="475" y="464" width="3" height="14"/>
<rect x="483" y="464" width="3" height="13"/>
<rect x="491" y="464" width="3" height="18"/>
<rect x="499" y="464" width="3" height="28"/>
<rect x="507" y="464" width="3" height="30"/>
<rect x="515" y="464" width="3" height="27"/>
<rect x="523" y="464" width="3" height="25"/>
<rect x="531" y="464" width="3" height="21"/>
<rect x="539" y="464" width="3" height="22"/>
<rect x="547" y="464" width="3" height="22"/>
<rect x="555" y="464" width="3" height="22"/>
<rect x="563" y="464" width="3" height="22"/>
<rect x="571" y="464" width="3" height="20"/>
<rect x="579" y="464" width="3" height="21"/>
<rect x="587" y="464" width="3" height="22"/>
<rect x="595" y="464" width="3" height="26"/>
<rect x="603" y="464" width="3" height="29"/>
<rect x="611" y="464" width="3" height="29"/>
<rect x="619" y="464" width="3" height="30"/>
<rect x="627" y="464" width="3" height="28"/>
<rect x="635" y="464" width="3" height="28"/>
<rect x="643" y="464" width="3" height="30"/>
<rect x="651" y="464" width="3" height="32"/>
<rect x="659" y="464" width="3" height="45"/>
<rect x="667" y="464" width="3" height="49"/>
<rect x="675" y="464" width="3" height="59"/>
</g>
<polyline clip-path="url(#p3)" points="12,528.5 20,533.2 28,537.5 36,539.5 44,540 52,540 60,540 68,539.8 76,537.3 84,533.7 92,529 100,522.3 108,515.5 116,509.5 124,502.8 132,494.5 140,486 148,476.8 156,469 164,461.6 172,456 180,450.2 188,444.3 196,440 204,437.2 212,435 220,435.2 228,435.4 236,437 244,438.6 252,442 260,445.4 268,449 276,452.2 284,455.2 292,456.8 300,457 308,457 316,455.2 324,453 332,450.6 340,446.8 348,443.2 356,440.4 364,437.5 372,435.9 380,435.2 388,434.8 396,436.6 404,438.6 412,441.6 420,443.4 428,443.8 436,446.6 444,448.4 452,451.8 460,454.5 468,456.3 476,459.7 484,464.3 492,467.1 500,471.5 508,475.3 516,479.2 524,481.7 532,484.2 540,485.8 548,486.5 556,487 564,487 572,487 580,486.3 588,485.6 596,485.4 604,486.5 612,487.4 620,488.5 628,488.5 636,489.2 644,490.4 652,491.5 660,494.4 668,497.2 676,499.9" fill="none" stroke="#ff0000" stroke-width="2.4" stroke-linejoin="round" shape-rendering="crispEdges"/>
<polygon points="12,546 12,552 18,552" fill="#778899"/>
<g shape-rendering="crispEdges" fill="none" stroke="#ffffff">
<rect x="11.5" y="34.5" width="667" height="254"/>
<rect x="11.5" y="290.5" width="667" height="128"/>
<rect x="11.5" y="420.5" width="667" height="132"/>
</g>
<g shape-rendering="crispEdges" fill="#fff">
<rect x="12" y="553" width="1" height="3"/>
<rect x="76" y="553" width="1" height="3"/>
<rect x="140" y="553" width="1" height="3"/>
<rect x="204" y="553" width="1" height="3"/>
<rect x="268" y="553" width="1" height="3"/>
<rect x="332" y="553" width="1" height="3"/>
<rect x="396" y="553" width="1" height="3"/>
<rect x="460" y="553" width="1" height="3"/>
<rect x="524" y="553" width="1" height="3"/>
<rect x="588" y="553" width="1" height="3"/>
<rect x="652" y="553" width="1" height="3"/>
<rect x="679" y="360" width="2" height="1"/><rect x="679" y="463" width="2" height="1"/>
<rect x="679" y="292" width="2" height="1"/><rect x="679" y="418" width="2" height="1"/><rect x="679" y="422" width="2" height="1"/>
</g>
<rect x="680" y="136" width="41" height="11" fill="#ffffff" shape-rendering="crispEdges"/>
<text x="684.5" y="145" font-size="9.2" fill="#000000" text-rendering="geometricPrecision">1845.73</text>
<text x="684" y="58" font-size="9.5" fill="#ffffff" text-rendering="geometricPrecision" stroke="#ffffff" stroke-width="0.12">1858.50</text>
<text x="684" y="91" font-size="9.5" fill="#ffffff" text-rendering="geometricPrecision" stroke="#ffffff" stroke-width="0.12">1853.70</text>
<text x="684" y="124" font-size="9.5" fill="#ffffff" text-rendering="geometricPrecision" stroke="#ffffff" stroke-width="0.12">1848.80</text>
<text x="684" y="157" font-size="9.5" fill="#ffffff" text-rendering="geometricPrecision" stroke="#ffffff" stroke-width="0.12">1843.90</text>
<text x="684" y="190" font-size="9.5" fill="#ffffff" text-rendering="geometricPrecision" stroke="#ffffff" stroke-width="0.12">1839.10</text>
<text x="684" y="223" font-size="9.5" fill="#ffffff" text-rendering="geometricPrecision" stroke="#ffffff" stroke-width="0.12">1834.20</text>
<text x="684" y="256" font-size="9.5" fill="#ffffff" text-rendering="geometricPrecision" stroke="#ffffff" stroke-width="0.12">1829.30</text>
<text x="684" y="289" font-size="9.5" fill="#ffffff" text-rendering="geometricPrecision" stroke="#ffffff" stroke-width="0.12">1824.40</text>
<text x="682" y="301" font-size="9.5" fill="#ffffff" text-rendering="geometricPrecision" stroke="#ffffff" stroke-width="0.12">120</text>
<text x="682" y="307" font-size="9.5" fill="#ffffff" text-rendering="geometricPrecision" stroke="#ffffff" stroke-width="0.12">100</text>
<text x="682" y="318" font-size="9.5" fill="#ffffff" text-rendering="geometricPrecision" stroke="#ffffff" stroke-width="0.12">80</text>
<text x="682" y="336" font-size="9.5" fill="#ffffff" text-rendering="geometricPrecision" stroke="#ffffff" stroke-width="0.12">50</text>
<text x="682" y="364" font-size="9.5" fill="#ffffff" text-rendering="geometricPrecision" stroke="#ffffff" stroke-width="0.12">0.00</text>
<text x="682" y="393" font-size="9.5" fill="#ffffff" text-rendering="geometricPrecision" stroke="#ffffff" stroke-width="0.12">-50</text>
<text x="682" y="410" font-size="9.5" fill="#ffffff" text-rendering="geometricPrecision" stroke="#ffffff" stroke-width="0.12">-80</text>
<text x="682" y="415" font-size="9.5" fill="#ffffff" text-rendering="geometricPrecision" stroke="#ffffff" stroke-width="0.12">-100</text>
<text x="682" y="431" font-size="9.5" fill="#ffffff" text-rendering="geometricPrecision" stroke="#ffffff" stroke-width="0.12">2.143</text>
<text x="682" y="467" font-size="9.5" fill="#ffffff" text-rendering="geometricPrecision" stroke="#ffffff" stroke-width="0.12">0.00</text>
<text x="682" y="549" font-size="9.5" fill="#ffffff" text-rendering="geometricPrecision" stroke="#ffffff" stroke-width="0.12">-4.503</text>
<g fill="#fff" shape-rendering="crispEdges"><rect x="15" y="41" width="7" height="1"/><rect x="16" y="42" width="5" height="1"/><rect x="17" y="43" width="3" height="1"/><rect x="18" y="44" width="1" height="1"/></g>
<text x="26" y="46" font-size="9.5" fill="#ffffff" text-rendering="geometricPrecision" stroke="#ffffff" stroke-width="0.12">XAUUSD,H1</text>
<text x="87" y="46" font-size="9.5" fill="#ffffff" text-rendering="geometricPrecision" stroke="#ffffff" stroke-width="0.12">1845.84</text>
<text x="123" y="46" font-size="9.5" fill="#ffffff" text-rendering="geometricPrecision" stroke="#ffffff" stroke-width="0.12">1846.59</text>
<text x="159" y="46" font-size="9.5" fill="#ffffff" text-rendering="geometricPrecision" stroke="#ffffff" stroke-width="0.12">1845.10</text>
<text x="195" y="46" font-size="9.5" fill="#ffffff" text-rendering="geometricPrecision" stroke="#ffffff" stroke-width="0.12">1845.73</text>
<text x="16" y="304" font-size="9.5" fill="#ffffff" text-rendering="geometricPrecision" stroke="#ffffff" stroke-width="0.12">R(9,26,52) 93.3 88.9 38.2</text>
<text x="16" y="433" font-size="9.5" fill="#ffffff" text-rendering="geometricPrecision" stroke="#ffffff" stroke-width="0.12">MACD(12,26,9) 2.706 1.813</text>
<text x="10.5" y="565" font-size="9.5" fill="#ffffff" text-rendering="geometricPrecision" stroke="#ffffff" stroke-width="0.12">7 Jun 2022</text>
<text x="74.5" y="565" font-size="9.5" fill="#ffffff" text-rendering="geometricPrecision" stroke="#ffffff" stroke-width="0.12">7 Jun 10:00</text>
<text x="138.5" y="565" font-size="9.5" fill="#ffffff" text-rendering="geometricPrecision" stroke="#ffffff" stroke-width="0.12">7 Jun 18:00</text>
<text x="202.5" y="565" font-size="9.5" fill="#ffffff" text-rendering="geometricPrecision" stroke="#ffffff" stroke-width="0.12">8 Jun 03:00</text>
<text x="266.5" y="565" font-size="9.5" fill="#ffffff" text-rendering="geometricPrecision" stroke="#ffffff" stroke-width="0.12">8 Jun 11:00</text>
<text x="330.5" y="565" font-size="9.5" fill="#ffffff" text-rendering="geometricPrecision" stroke="#ffffff" stroke-width="0.12">8 Jun 19:00</text>
<text x="394.5" y="565" font-size="9.5" fill="#ffffff" text-rendering="geometricPrecision" stroke="#ffffff" stroke-width="0.12">9 Jun 04:00</text>
<text x="458.5" y="565" font-size="9.5" fill="#ffffff" text-rendering="geometricPrecision" stroke="#ffffff" stroke-width="0.12">9 Jun 12:00</text>
<text x="522.5" y="565" font-size="9.5" fill="#ffffff" text-rendering="geometricPrecision" stroke="#ffffff" stroke-width="0.12">9 Jun 20:00</text>
<text x="586.5" y="565" font-size="9.5" fill="#ffffff" text-rendering="geometricPrecision" stroke="#ffffff" stroke-width="0.12">10 Jun 05:00</text>
<text x="650.5" y="565" font-size="9.5" fill="#ffffff" text-rendering="geometricPrecision" stroke="#ffffff" stroke-width="0.12">10 Jun 13:00</text>
</svg></body></html>
